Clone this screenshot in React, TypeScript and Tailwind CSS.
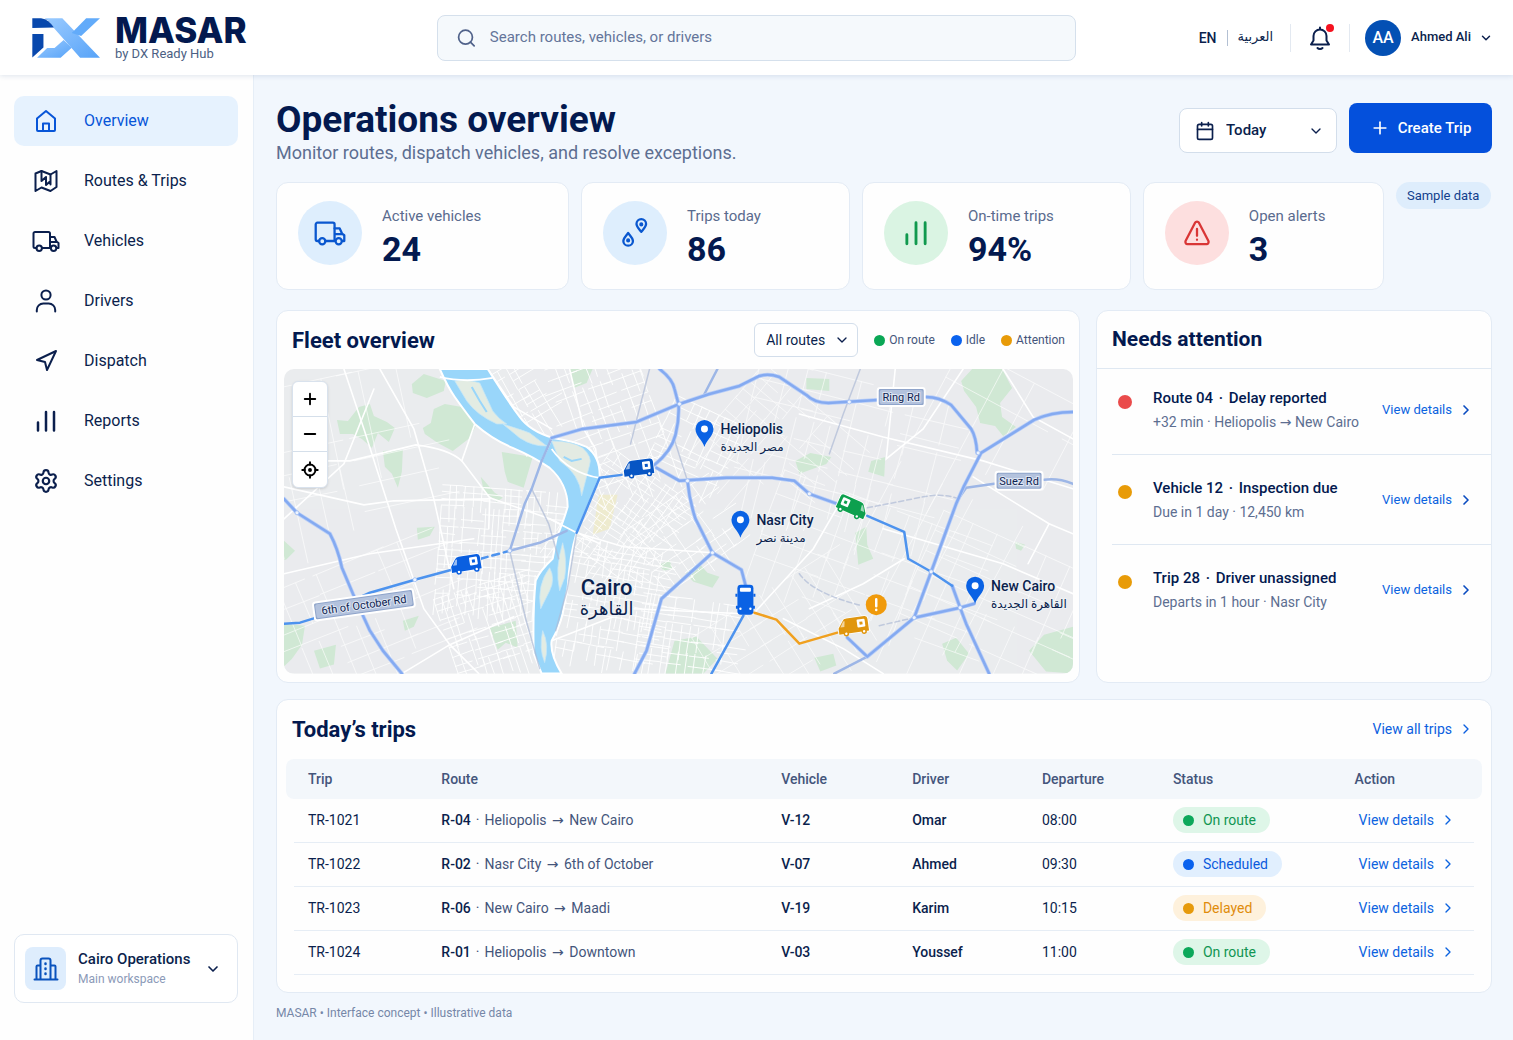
import type { ReactNode } from "react";
import {
  Calendar,
  ChevronDown,
  ChevronRight,
  Minus,
  Navigation,
  Plus,
  Search,
  Settings,
} from "lucide-react";

type Status = "On route" | "Scheduled" | "Delayed";

interface Trip {
  id: string;
  route: string;
  from: string;
  to: string;
  vehicle: string;
  driver: string;
  departure: string;
  status: Status;
}

const trips: Trip[] = [
  { id: "TR-1021", route: "R-04", from: "Heliopolis", to: "New Cairo", vehicle: "V-12", driver: "Omar", departure: "08:00", status: "On route" },
  { id: "TR-1022", route: "R-02", from: "Nasr City", to: "6th of October", vehicle: "V-07", driver: "Ahmed", departure: "09:30", status: "Scheduled" },
  { id: "TR-1023", route: "R-06", from: "New Cairo", to: "Maadi", vehicle: "V-19", driver: "Karim", departure: "10:15", status: "Delayed" },
  { id: "TR-1024", route: "R-01", from: "Heliopolis", to: "Downtown", vehicle: "V-03", driver: "Youssef", departure: "11:00", status: "On route" },
];

const statusStyles: Record<Status, { pill: string; dot: string }> = {
  "On route": { pill: "bg-[#def6e8] text-[#119552]", dot: "bg-[#0ca85a]" },
  Scheduled: { pill: "bg-[#e1effe] text-[#0b5bdd]", dot: "bg-[#0a62ee]" },
  Delayed: { pill: "bg-[#fef1dc] text-[#e08c0b]", dot: "bg-[#e69a0c]" },
};

const alerts = [
  { title: "Route 04", issue: "Delay reported", detail: "+32 min · Heliopolis → New Cairo", dot: "bg-[#ea4b4b]" },
  { title: "Vehicle 12", issue: "Inspection due", detail: "Due in 1 day · 12,450 km", dot: "bg-[#e89b08]" },
  { title: "Trip 28", issue: "Driver unassigned", detail: "Departs in 1 hour · Nasr City", dot: "bg-[#e89b08]" },
];

interface IconProps {
  className?: string;
  children?: ReactNode;
}

function Icon({ className = "size-7", children }: IconProps) {
  return (
    <svg
      viewBox="0 0 28 28"
      fill="none"
      stroke="currentColor"
      strokeWidth="2"
      strokeLinecap="round"
      strokeLinejoin="round"
      aria-hidden="true"
      className={className}
    >
      {children}
    </svg>
  );
}

function HomeIcon() {
  return (
    <Icon>
      <path d="M5 11.5 14 4l9 7.5V23a1 1 0 0 1-1 1H6a1 1 0 0 1-1-1z" />
      <path d="M11 24v-7.5h6V24" />
    </Icon>
  );
}

function RoutesIcon() {
  return (
    <Icon>
      <path d="M3.500 6.500 9.500 4l9 3.500 6-3.500v16l-6 4-9-3.500-6 3.500z" />
      <path d="M9.500 4v10M18.500 7.500v10M9.500 14l4.500-4v8l4.500-4" />
    </Icon>
  );
}

function TruckIcon({ className }: IconProps) {
  return (
    <Icon className={className}>
      <path d="M4.500 21H3a1.500 1.500 0 0 1-1.500-1.500v-13A1.500 1.500 0 0 1 3 5h13.500A1.500 1.500 0 0 1 18 6.500V21H10" />
      <path d="M18 10h4.500l2 4.500 2 1.500v5H25M18.500 15h6" />
      <circle cx="7.200" cy="21.200" r="2.700" />
      <circle cx="21.600" cy="21.200" r="2.700" />
    </Icon>
  );
}

function DriverIcon() {
  return (
    <Icon>
      <circle cx="14" cy="8" r="4.600" />
      <path d="M4.800 24.500V23a6.500 6.500 0 0 1 6.500-6.500h5.400a6.500 6.500 0 0 1 6.500 6.500v1.500" />
    </Icon>
  );
}

function BarsIcon({ className }: IconProps) {
  return (
    <Icon className={className}>
      <path d="M6 15.500v8M14 5v18.500M22 5v18.500" strokeWidth="2.500" />
    </Icon>
  );
}

function PinsIcon() {
  return (
    <Icon className="size-8">
      <path d="M19.500 13c-2.300-3-4.200-4.600-4.200-6.900a4.200 4.200 0 0 1 8.400 0c0 2.300-1.900 3.900-4.200 6.900z" />
      <path d="M8 14c-2.300 3-4.200 4.600-4.200 6.900a4.200 4.200 0 0 0 8.400 0C12.200 18.600 10.300 17 8 14z" />
      <circle cx="19.500" cy="6.500" r="0.800" fill="currentColor" />
      <circle cx="8" cy="20.500" r="0.800" fill="currentColor" />
    </Icon>
  );
}

function AlertIcon() {
  return (
    <Icon className="size-8">
      <path d="M12.300 5 4 21a2 2 0 0 0 1.700 2.800h16.600A2 2 0 0 0 24 21L15.700 5a2 2 0 0 0-3.400 0z" />
      <path d="M14 10.500v6M14 19.800v.2" />
    </Icon>
  );
}

function BellIcon() {
  return (
    <Icon className="size-7">
      <path d="M5 20.500h18l-2.500-4V12a6.500 6.500 0 0 0-13 0v4.500zM14 5V3.500" />
      <path d="M11.500 24c1.200 1.300 3.800 1.300 5 0" />
    </Icon>
  );
}

function BuildingsIcon() {
  return (
    <Icon>
      <path d="M2.500 24.500h23M8.500 24.500V5.500a2 2 0 0 1 2-2h6a2 2 0 0 1 2 2v19M8.500 10.500H5.500a1 1 0 0 0-1 1v13M18.500 10.500h4a1 1 0 0 1 1 1v13" />
      <path d="M13.500 8.500v.5M13.500 13.500v.5M13.500 18.500v.5" strokeWidth="2.500" />
    </Icon>
  );
}

function LocateIcon() {
  return (
    <Icon className="size-[18px]">
      <circle cx="14" cy="14" r="8.500" strokeWidth="3" />
      <circle cx="14" cy="14" r="2" fill="currentColor" />
      <path d="M14 2v4M14 22v4M2 14h4M22 14h4" strokeWidth="3" />
    </Icon>
  );
}

function Logo() {
  return (
    <svg viewBox="97 50 202 118" className="h-10 w-17 shrink-0" aria-hidden="true">
      <defs>
        <linearGradient id="logo-light" x1="0" y1="0" x2="1" y2="1">
          <stop offset="0" stopColor="#9bcbff" />
          <stop offset="1" stopColor="#57a3f8" />
        </linearGradient>
      </defs>
      <path d="M134 50H187L299 168H240L160 77Q150 58 134 50Z" fill="url(#logo-light)" />
      <path d="M258 50H299L243 103L215 94Z" fill="#62abfa" />
      <path d="M112 168L142 139H164L191 115L215 138L182 168Z" fill="url(#logo-light)" />
      <path d="M98 50H124Q148 54 162 78L98 79Z" fill="#0848ad" />
      <path d="M98 97H131V137L98 167Z" fill="#0848ad" />
    </svg>
  );
}

function Header() {
  return (
    <header className="relative z-10 grid h-[75px] shrink-0 grid-cols-[13fr_19fr_13fr] items-center bg-white shadow-[0_1px_5px_rgba(30,70,130,0.14)]">
      <a href="#home" className="flex items-center gap-[15px] pl-8">
        <Logo />
        <span className="flex flex-col">
          <span className="font-[Inter,sans-serif] text-[35px] leading-8 font-extrabold text-[#03194f]">
            MASAR
          </span>
          <span className="text-[13px] leading-4 text-[#4c5f83]">by DX Ready Hub</span>
        </span>
      </a>

      <label className="flex h-[46px] items-center gap-3 rounded-lg border border-[#d5e0ec] bg-[#f5f9fc] pl-[17px]">
        <Search className="size-6 p-px text-[#50628a]" aria-hidden="true" />
        <input
          type="search"
          aria-label="Search"
          placeholder="Search routes, vehicles, or drivers"
          className="w-full bg-transparent text-[15px] outline-none placeholder:text-[#64759a]"
        />
      </label>

      <div className="flex items-center justify-end pr-5 text-sm font-medium">
        <button type="button">EN</button>
        <span className="mx-[10px] h-4 w-px bg-[#b3c0d3]" />
        <button type="button" lang="ar" className="text-[13px]">
          العربية
        </button>
        <span className="ml-[17px] h-7 w-px bg-[#e3e9f1]" />
        <button type="button" aria-label="Notifications" className="relative mx-[15px]">
          <BellIcon />
          <span className="absolute top-0 right-0 size-2 rounded-full bg-[#f5121f]" />
        </button>
        <span className="h-7 w-px bg-[#e3e9f1]" />
        <button type="button" className="ml-[15px] flex items-center">
          <span className="flex size-9 items-center justify-center rounded-full bg-[#0450b4] text-base text-white">
            AA
          </span>
          <span className="mr-2 ml-[10px] text-[13px]">Ahmed Ali</span>
          <ChevronDown className="size-[14px]" strokeWidth={2.5} aria-hidden="true" />
        </button>
      </div>
    </header>
  );
}

const navItems = [
  { label: "Overview", icon: <HomeIcon /> },
  { label: "Routes & Trips", icon: <RoutesIcon /> },
  { label: "Vehicles", icon: <TruckIcon /> },
  { label: "Drivers", icon: <DriverIcon /> },
  { label: "Dispatch", icon: <Navigation className="size-7 p-0.5" aria-hidden="true" /> },
  { label: "Reports", icon: <BarsIcon /> },
  { label: "Settings", icon: <Settings className="size-7 p-px" aria-hidden="true" /> },
];

function Sidebar() {
  return (
    <aside className="flex w-[254px] shrink-0 flex-col justify-between border-r border-[#e6eef7] bg-[#fefefe] pt-[21px] pr-[15px] pb-[37px] pl-[14px]">
      <nav className="flex flex-col gap-[10px]">
        {navItems.map((item, i) => (
          <a
            key={item.label}
            href={`#${item.label}`}
            aria-current={i === 0 ? "page" : undefined}
            className={
              i === 0
                ? "flex h-[50px] items-center gap-6 rounded-[10px] bg-[#e6f2fe] pl-[18px] text-[#0755d8]"
                : "flex h-[50px] items-center gap-6 rounded-[10px] pl-[18px]"
            }
          >
            {item.icon}
            {item.label}
          </a>
        ))}
      </nav>

      <button
        type="button"
        className="flex h-[69px] items-center rounded-[10px] border border-[#e0e8f2] bg-white pr-4 pl-[10px] text-left"
      >
        <span className="flex h-[43px] w-[41px] items-center justify-center rounded-lg bg-[#deedfd] text-[#0a53bd]">
          <BuildingsIcon />
        </span>
        <span className="ml-3 flex flex-1 flex-col">
          <span className="text-[15px] leading-5 font-medium">Cairo Operations</span>
          <span className="text-xs leading-5 text-[#8b9ab8]">Main workspace</span>
        </span>
        <ChevronDown className="size-4" strokeWidth={2.5} aria-hidden="true" />
      </button>
    </aside>
  );
}

interface StatCardProps {
  label: string;
  value: string;
  tone: string;
  icon: ReactNode;
}

function StatCard({ label, value, tone, icon }: StatCardProps) {
  return (
    <div className="flex h-[108px] items-start gap-5 rounded-xl border border-[#e3ebf5] bg-[#fefefe] pt-[18px] pl-[21px]">
      <span className={`flex size-16 shrink-0 items-center justify-center rounded-full ${tone}`}>
        {icon}
      </span>
      <div className="flex flex-col pt-[5px]">
        <span className="text-[15px] leading-5 text-[#5a6b8e]">{label}</span>
        <span className="pt-[3px] text-[34px] leading-10 font-bold text-[#03194f]">{value}</span>
      </div>
    </div>
  );
}

// small seeded generator, so the street pattern stays the same on every render
function seeded(seed: number) {
  let s = seed;
  return () => {
    s = (s * 16807) % 2147483647;
    return s / 2147483647;
  };
}

// path of a slightly irregular street grid, turned by deg round its centre
function streetGrid(cx: number, cy: number, w: number, h: number, step: number, deg: number, seed: number) {
  const rand = seeded(seed);
  const a = (deg * Math.PI) / 180;
  const point = (x: number, y: number) =>
    `${(cx + x * Math.cos(a) - y * Math.sin(a)).toFixed(1)} ${(cy + x * Math.sin(a) + y * Math.cos(a)).toFixed(1)}`;
  let d = "";
  for (let y = -h / 2; y <= h / 2; y += step * (0.7 + rand() * 0.6)) {
    for (let x = -w / 2; x < w / 2; x += step * 3) {
      if (rand() < 0.8) d += `M${point(x, y)}L${point(x + step * (2 + rand() * 2), y + rand() * 2 - 1)}`;
    }
  }
  for (let x = -w / 2; x <= w / 2; x += step * (0.7 + rand() * 0.6)) {
    for (let y = -h / 2; y < h / 2; y += step * 3) {
      if (rand() < 0.8) d += `M${point(x, y)}L${point(x + rand() * 2 - 1, y + step * (2 + rand() * 2))}`;
    }
  }
  return d;
}

const streets = [
  streetGrid(215, 175, 120, 110, 7, 4, 11),
  streetGrid(205, 255, 90, 80, 8, -18, 23),
  streetGrid(335, 150, 90, 110, 7, 35, 37),
  streetGrid(325, 235, 90, 120, 7, 10, 41),
  streetGrid(330, 45, 130, 80, 10, 70, 53),
  streetGrid(415, 75, 80, 70, 9, 25, 67),
  streetGrid(400, 170, 90, 80, 9, -35, 71),
  streetGrid(400, 265, 90, 70, 9, 8, 83),
  streetGrid(235, 25, 50, 60, 9, -30, 89),
];

const outerStreets = [
  streetGrid(70, 90, 180, 170, 30, -12, 97),
  streetGrid(70, 250, 170, 110, 21, -22, 101),
  streetGrid(560, 75, 200, 130, 17, 14, 103),
  streetGrid(570, 190, 190, 120, 20, 20, 107),
  streetGrid(500, 265, 160, 90, 18, -32, 109),
  streetGrid(715, 80, 160, 150, 44, 28, 113),
  streetGrid(710, 240, 170, 140, 26, 24, 127),
  streetGrid(480, 65, 90, 110, 14, 40, 131),
];

const parks = [
  "M128 15 140 5 162 12 160 22 143 29 129 24Z",
  "M139 59 147 54 150 40 161 35 184 39 192 57 186 69 169 82 154 74 141 65Z",
  "M53 51 64 52 75 38 86 35 90 47 103 53 111 59 105 73 94 64 88 79 78 70 69 65 56 65Z",
  "M99 82 119 81 118 103 114 119 108 105 101 98Z",
  "M218 83 249 88 240 119 224 113 221 103Z",
  "M197 108 211 124 219 129 213 133 200 122Z",
  "M0 255 21 257 18 276 8 290 0 298Z",
  "M30 282 52 276 50 296 36 300Z",
  "M206 259 218 256 232 252 234 279 222 274 214 281Z",
  "M133 159 151 158 146 167 134 171Z",
  "M119 252 135 247 130 258 121 262Z",
  "M0 172 11 182 2 191 0 191Z",
  "M286 0 309 0 303 14 290 19Z",
  "M391 272 413 268 434 290 420 305 382 305Z",
  "M402 205 415 194 424 204 436 208 429 219 410 213Z",
  "M512 92 527 84 548 88 543 95 516 105Z",
  "M678 12 689 0 719 0 729 19 717 34 719 48 733 58 720 67 712 57 697 54 693 38 681 22Z",
  "M523 9 546 10 546 22 523 20Z",
  "M588 92 602 88 601 108 585 103Z",
  "M746 282 761 266 790 258 790 305 763 303Z",
  "M659 275 673 269 686 285 674 302 664 292Z",
  "M531 289 550 285 553 297 537 303Z",
  "M572 164 583 158 584 176 590 190 575 196Z",
  "M732 173 742 176 738 182 733 180Z",
  "M376 196 386 191 389 200 380 202Z",
];

const highways = [
  "M0 130 13 144 46 165Q54 180 58 199L69 225 86 262 99 282 118 305",
  "M268 69 299 60 353 53 396 35 426 25 456 17 476 7Q485 4 496 8L523 26Q531 34 545 34L594 31",
  "M643 28Q656 28 668 36L688 60Q693 68 694 84",
  "M376 0Q389 10 391 20L395 35Q396 50 392 66T371 96",
  "M373 99 396 112 443 109 489 109 511 112 526 125 554 135",
  "M404 112Q406 132 412 150L429 184 458 201 462 216",
  "M429 184 378 230 363 282 351 305",
  "M790 43Q768 43 751 51L698 84 681 117 673 135 648 203 631 249",
  "M631 249 677 239 691 235",
  "M631 249 584 288 564 269",
  "M669 217 677 239 683 255 706 305",
];

const secondaryHighways = [
  "M226 182 241 135 248 120 258 92 268 69",
  "M434 0 421 25",
  "M676 129 683 119 711 115",
  "M761 111Q775 109 790 115",
  "M584 288 551 305",
  "M226 182 256 174 283 162",
];

const faintRoads = [
  "M226 182 242 250 256 300",
  "M248 120 265 155 275 190",
  "M366 0 347 75",
  "M390 68 404 112",
  "M293 164 284 219 272 262",
  "M577 0 560 45 546 85",
];

const activeRoutes = [
  "M0 255 16 254 29 250 86 224 131 211 168 201",
  "M316 109 338 106M316 109 293 164",
  "M584 147 621 163 625 190 648 203 669 217",
  "M460 247 428 305",
];

const junctions = [
  [226, 182], [131, 211], [13, 144], [396, 35], [404, 112], [429, 184],
  [648, 203], [677, 239], [631, 249], [695, 84], [566, 33], [526, 125],
];

const places = [
  { name: "Heliopolis", arabic: "مصر الجديدة", x: 421, y: 78 },
  { name: "Nasr City", arabic: "مدينة نصر", x: 457, y: 169 },
  { name: "New Cairo", arabic: "القاهرة الجديدة", x: 692, y: 235 },
];

interface RoadSignProps {
  x: number;
  y: number;
  width: number;
  name: string;
  tilt?: number;
}

function RoadSign({ x, y, width, name, tilt = 0 }: RoadSignProps) {
  return (
    <g transform={`translate(${x} ${y}) rotate(${tilt})`}>
      <rect x={-width / 2} y="-9" width={width} height="18" rx="2.500" fill="#8fa4ca" stroke="#fff" strokeWidth="2" />
      <rect x={-width / 2 + 2} y="-7" width={width - 4} height="14" rx="2" fill="#b3c2dd" />
      <text y="4" textAnchor="middle" fontSize="11" fill="#0e2350" stroke="#dfe7f4" strokeWidth="2" paintOrder="stroke">
        {name}
      </text>
    </g>
  );
}

interface VanProps {
  x: number;
  y: number;
  color: string;
  tilt: number;
  flip?: boolean;
}

function Van({ x, y, color, tilt, flip = false }: VanProps) {
  return (
    <g transform={`translate(${x} ${y}) rotate(${tilt}) scale(${flip ? -1 : 1} 1)`}>
      <path
        d="M-15 7V1L-10-6Q-9-8-6-8H12Q15-8 15-5V7Z"
        fill={color}
        stroke="#fff"
        strokeWidth="1.500"
        paintOrder="stroke"
      />
      <path d="M-13 0-9.500-5.500H-8L-9 0Z" fill="#fff" fillOpacity="0.6" />
      <rect x="4" y="-5.500" width="8" height="8" rx="1" fill="#fff" />
      <rect x="6.500" y="-3" width="3" height="3" fill={color} />
      <circle cx="-8" cy="7" r="2" fill="#fff" stroke={color} strokeWidth="1.500" />
      <circle cx="10" cy="7" r="2" fill="#fff" stroke={color} strokeWidth="1.500" />
    </g>
  );
}

function FleetMap() {
  return (
    <svg
      viewBox="0 0 790 305"
      role="img"
      aria-label="Map of Cairo with the live position of the fleet"
      className="block h-auto w-full rounded-[10px]"
    >
      <rect width="790" height="305" fill="#eaecee" />
      <g fill="#d0e8d4">
        {parks.map((d) => (
          <path key={d} d={d} />
        ))}
      </g>
      <path d="M315 126 334 126 326 160 309 166Z" fill="#eeebcf" />

      <g fill="none" stroke="#fff" strokeLinecap="round">
        <g strokeWidth="0.900">
          {streets.map((d) => (
            <path key={d} d={d} />
          ))}
        </g>
        <g strokeWidth="0.900" opacity="0.700">
          {outerStreets.map((d) => (
            <path key={d} d={d} />
          ))}
        </g>
        <g strokeWidth="1.600">
          <path d="M44 92 66 92 132 76Q165 80 178 92L206 129 266 150 316 175" />
          <path d="M0 118 80 136 110 132 206 130" />
          <path d="M60 0 80 60 112 160 140 240 166 276 195 305" />
          <path d="M96 0 130 60 150 130 170 220" />
          <path d="M118 305 166 276 230 248" />
          <path d="M0 205 86 185 190 170" />
          <path d="M0 150 60 95 90 20" />
          <path d="M191 55 178 92M206 129 205 160" />
          <path d="M204 0 230 38 268 60" />
          <path d="M286 0 300 60 312 80 316 109" />
          <path d="M293 164 340 178 430 184M268 272 350 240 460 245" />
          <path d="M516 45 600 68 700 92 790 120" />
          <path d="M720 0 750 48 790 70M690 108 766 155 790 165" />
          <path d="M526 240 580 215 621 190M600 160 720 195 790 225" />
          <path d="M612 0 603 90 640 60 680 0M766 155 745 195" />
          <path d="M500 250 560 280 600 305M470 245 530 180 556 135" />
        </g>
      </g>

      <path
        d="M156 0Q164 18 171 28T191 55Q208 70 229 79T266 99Q284 115 284 138Q280 152 273 169L269 190Q256 202 252 212Q249 240 250 285L258 305H278Q266 285 268 272Q276 258 279 245L284 219Q286 186 293 164L316 109Q317 88 303 78Q290 72 269 69Q246 62 236 48Q224 32 204 0Z"
        fill="#99d6fa"
        stroke="#fff"
        strokeWidth="2"
      />
      <g fill="#e3ece3" stroke="#c4e6f8" strokeWidth="0.800">
        <path d="M171 12Q185 10 196 14L209 42Q215 50 223 55L213 55Q193 46 183 32Z" />
        <path d="M219 55Q235 60 246 64L263 77Q250 78 236 69Z" />
        <path d="M268 72Q288 72 299 79Q309 88 306 96L298 127Q296 105 276 92Z" />
        <path d="M279 174Q284 192 281 209L276 222Q271 200 279 174Z" />
        <path d="M266 199Q272 210 266 222L257 240Q253 216 266 199Z" />
        <path d="M259 262Q266 276 261 294Q255 280 259 262Z" />
      </g>
      <path d="M188 18 196 32 203 43M280 88 288 92 298 90" fill="none" stroke="#99d6fa" strokeWidth="2" />
      <g fill="none" stroke="#fff" strokeWidth="1.800">
        <path d="M156 8Q180 14 209 9M266 150 293 164M258 92 270 66M268 80Q285 104 316 109" />
      </g>

      <g fill="none" strokeLinejoin="round" strokeLinecap="round">
        <g stroke="#aebbd6" strokeWidth="1.500" opacity="0.700">
          {faintRoads.map((d) => (
            <path key={d} d={d} />
          ))}
          <path d="M584 139Q620 132 640 128T676 130M516 205Q530 225 579 237M596 257 631 249" strokeDasharray="5 3" />
        </g>
        <g stroke="#9db6e6" strokeWidth="2.500">
          {secondaryHighways.map((d) => (
            <path key={d} d={d} />
          ))}
        </g>
        <g stroke="#b9cef7" strokeWidth="4">
          {highways.map((d) => (
            <path key={d} d={d} />
          ))}
        </g>
        <g stroke="#84aaf1" strokeWidth="2.500">
          {highways.map((d) => (
            <path key={d} d={d} />
          ))}
        </g>
        <g stroke="#4d93ee" strokeWidth="2.500">
          {activeRoutes.map((d) => (
            <path key={d} d={d} />
          ))}
          <path d="M197 190 226 182" strokeDasharray="7 5" />
        </g>
        <path d="M471 244 493 251 516 275 554 264" stroke="#f0a01f" strokeWidth="2.500" />
      </g>

      <g fill="#eef4ff" stroke="#9dbcf2" strokeWidth="0.800">
        {junctions.map(([x, y]) => (
          <circle key={`${x}-${y}`} cx={x} cy={y} r="2" />
        ))}
      </g>

      <RoadSign x={618} y={28} width={47} name="Ring Rd" />
      <RoadSign x={736} y={112} width={47} name="Suez Rd" />
      <RoadSign x={80} y={236} width={101} name="6th of October Rd" tilt={-8} />

      <Van x={355} y={99} color="#0755c4" tilt={-7} />
      <Van x={182} y={195} color="#0a5fe0" tilt={-9} />
      <Van x={569} y={138} color="#0da04e" tilt={24} flip />
      <Van x={570} y={257} color="#e0960e" tilt={-8} />
      <g transform="translate(462 231)">
        <path d="M-9-6V-3M9-6V-3M-8.500 6V9M8.500 6V9" stroke="#0a62e4" strokeWidth="2" />
        <rect x="-8" y="-15" width="16" height="30" rx="3.500" fill="#0a62e4" />
        <rect x="-5.500" y="-12" width="11" height="4" rx="1" fill="#fff" />
        <circle cx="-5" cy="9" r="1.200" fill="#fff" />
        <circle cx="5" cy="9" r="1.200" fill="#fff" />
      </g>
      <g transform="translate(593 236)">
        <circle r="10.500" fill="#f09a0b" />
        <path d="M0-5.500V1.500M0 5V5.200" stroke="#fff" strokeWidth="2.500" strokeLinecap="round" />
      </g>

      {places.map((place) => (
        <g key={place.name} transform={`translate(${place.x} ${place.y})`}>
          <path d="M0 0C-2-7-9-11-9-18A9 9 0 0 1 9-18C9-11 2-7 0 0Z" fill="#0a62e4" />
          <circle cy="-18" r="3.500" fill="#fff" />
          <g fill="#0b1f4d" stroke="#eef1f4" strokeWidth="2.500" strokeLinejoin="round" paintOrder="stroke">
            <text x="16" y="-13" fontSize="14" fontWeight="500">
              {place.name}
            </text>
            <text x="16" y="4" fontSize="12">
              {place.arabic}
            </text>
          </g>
        </g>
      ))}
      <g fill="#0b1f4d" stroke="#eef1f4" strokeWidth="3" strokeLinejoin="round" paintOrder="stroke" textAnchor="middle">
        <text x="323" y="226" fontSize="22" fontWeight="500">
          Cairo
        </text>
        <text x="323" y="246" fontSize="18">
          القاهرة
        </text>
      </g>
    </svg>
  );
}

const legend = [
  { label: "On route", dot: "bg-[#0aa755]" },
  { label: "Idle", dot: "bg-[#0a62ee]" },
  { label: "Attention", dot: "bg-[#e89b08]" },
];

function FleetOverview() {
  return (
    <section className="rounded-xl border border-[#e3ebf5] bg-[#fefefe] pr-[6px] pb-2 pl-[7px]">
      <div className="flex h-[58px] items-center pr-2 pl-2">
        <h2 className="flex-1 text-[22px] font-bold text-[#03194f]">Fleet overview</h2>
        <label className="relative flex items-center">
          <select
            aria-label="Routes shown"
            className="h-[34px] w-[104px] appearance-none rounded-md border border-[#d3deeb] bg-white pl-[11px] text-sm"
          >
            <option>All routes</option>
          </select>
          <ChevronDown className="pointer-events-none absolute right-2 size-4" aria-hidden="true" />
        </label>
        <ul className="ml-4 flex gap-4 text-xs text-[#44557b]">
          {legend.map((item) => (
            <li key={item.label} className="flex items-center gap-1">
              <span className={`size-[11px] rounded-full ${item.dot}`} />
              {item.label}
            </li>
          ))}
        </ul>
      </div>
      <div className="relative">
        <FleetMap />
        <div className="absolute top-3 left-2 flex w-9 flex-col divide-y divide-[#d5dfea] rounded-md border border-[#d9e2ed] bg-white text-black shadow-sm">
          <button type="button" aria-label="Zoom in" className="flex h-[35px] items-center justify-center">
            <Plus className="size-[18px]" strokeWidth={2.5} />
          </button>
          <button type="button" aria-label="Zoom out" className="flex h-[35px] items-center justify-center">
            <Minus className="size-[18px]" strokeWidth={2.5} />
          </button>
          <button type="button" aria-label="Centre map" className="flex h-[35px] items-center justify-center">
            <LocateIcon />
          </button>
        </div>
      </div>
    </section>
  );
}

function NeedsAttention() {
  return (
    <section className="rounded-xl border border-[#e3ebf5] bg-[#fefefe]">
      <h2 className="flex h-[58px] items-center border-b border-[#dfe8f2] pl-[15px] text-[21px] font-bold text-[#03194f]">
        Needs attention
      </h2>
      <ul className="ml-[15px] divide-y divide-[#dfe8f2]">
        {alerts.map((alert) => (
          <li
            key={alert.title}
            className="flex h-[90px] items-center pr-[17px] pl-[6px] first:h-[86px] first:pb-1"
          >
            <span className={`mr-[21px] mb-4 size-[14px] shrink-0 rounded-full ${alert.dot}`} />
            <div className="flex-1">
              <p className="text-[15px] leading-6 font-medium text-[#03194f]">
                {alert.title} <span className="mx-0.5">·</span> {alert.issue}
              </p>
              <p className="text-sm leading-6 text-[#5d6e91]">{alert.detail}</p>
            </div>
            <a href="#details" className="flex items-center gap-1.5 text-[13px] text-[#0b63e0]">
              View details
              <ChevronRight className="size-4 text-[#0a4cc0]" strokeWidth={2.5} aria-hidden="true" />
            </a>
          </li>
        ))}
      </ul>
    </section>
  );
}

function TripsTable() {
  return (
    <section className="mt-4 rounded-xl border border-[#e3ebf5] bg-[#fefefe] pr-[17px] pb-[17px] pl-[17px]">
      <div className="-ml-0.5 flex h-[59px] items-center justify-between">
        <h2 className="text-[22px] font-bold text-[#03194f]">Today’s trips</h2>
        <a href="#trips" className="flex items-center gap-1.5 text-sm text-[#0b5fe0]">
          View all trips
          <ChevronRight className="size-4" aria-hidden="true" />
        </a>
      </div>
      <table className="w-full table-fixed border-separate border-spacing-0 text-left text-sm">
        <colgroup>
          <col className="w-[11.3%]" />
          <col className="w-[28.8%]" />
          <col className="w-[11.1%]" />
          <col className="w-[11%]" />
          <col className="w-[11.1%]" />
          <col className="w-[15.4%]" />
          <col />
        </colgroup>
        <thead>
          <tr className="h-10 text-[#44557b] *:relative *:bg-[#f3f7fb] *:pl-[14px] *:font-medium">
            <th className="before:absolute before:inset-y-0 before:-left-2 before:w-2 before:rounded-l-lg before:bg-[#f3f7fb]">
              Trip
            </th>
            <th>Route</th>
            <th>Vehicle</th>
            <th>Driver</th>
            <th>Departure</th>
            <th>Status</th>
            <th className="before:absolute before:inset-y-0 before:-right-2 before:w-2 before:rounded-r-lg before:bg-[#f3f7fb]">
              Action
            </th>
          </tr>
        </thead>
        <tbody>
          {trips.map((trip) => (
            <tr key={trip.id} className="h-11 *:border-b *:border-[#e6edf5] *:pl-[14px]">
              <td>{trip.id}</td>
              <td className="text-[#44557b]">
                <span className="font-medium text-[#0b1f4d]">{trip.route}</span>
                <span className="mx-[5px]">·</span>
                {trip.from} <span className="mx-0.5">→</span> {trip.to}
              </td>
              <td className="font-medium">{trip.vehicle}</td>
              <td className="font-medium">{trip.driver}</td>
              <td>{trip.departure}</td>
              <td>
                <span
                  className={`inline-flex h-[26px] items-center gap-[9px] rounded-full pr-[14px] pl-[10px] ${statusStyles[trip.status].pill}`}
                >
                  <span className={`size-[11px] rounded-full ${statusStyles[trip.status].dot}`} />
                  {trip.status}
                </span>
              </td>
              <td>
                <a href={`#${trip.id}`} className="flex items-center gap-1.5 pl-1 text-[#0b63e0]">
                  View details
                  <ChevronRight className="size-4" aria-hidden="true" />
                </a>
              </td>
            </tr>
          ))}
        </tbody>
      </table>
    </section>
  );
}

export default function App() {
  return (
    <div className="flex min-h-screen flex-col bg-[#f2f7fd] font-[Roboto,'DejaVu_Sans',sans-serif] text-base text-[#0b1f4d]">
      <Header />
      <div className="flex flex-1">
        <Sidebar />
        <main className="min-w-0 flex-1 pt-[25px] pr-[21px] pl-[22px]">
          <div className="flex items-start justify-between">
            <div>
              <h1 className="text-[37px] leading-10 font-bold text-[#03194f]">Operations overview</h1>
              <p className="text-lg leading-[26px] text-[#5d6e91]">
                Monitor routes, dispatch vehicles, and resolve exceptions.
              </p>
            </div>
            <div className="flex items-end gap-3 pt-[3px]">
              <label className="relative flex items-center">
                <Calendar className="pointer-events-none absolute left-4 size-5" aria-hidden="true" />
                <select
                  aria-label="Period"
                  className="h-[45px] w-[158px] appearance-none rounded-lg border border-[#d3deeb] bg-white pl-[46px] text-[15px] font-medium"
                >
                  <option>Today</option>
                </select>
                <ChevronDown className="pointer-events-none absolute right-[13px] size-4" aria-hidden="true" />
              </label>
              <button
                type="button"
                className="flex h-[50px] w-[143px] items-center justify-center gap-2 rounded-lg bg-[#0450dc] text-[15px] font-medium text-white"
              >
                <Plus className="size-5" aria-hidden="true" />
                Create Trip
              </button>
            </div>
          </div>

          <div className="mt-4 grid grid-cols-[73fr_67fr_67fr_60fr_24fr] gap-3">
            <StatCard label="Active vehicles" value="24" tone="bg-[#deeefd] text-[#0a57cf]" icon={<TruckIcon className="size-8" />} />
            <StatCard label="Trips today" value="86" tone="bg-[#deeefd] text-[#0a57cf]" icon={<PinsIcon />} />
            <StatCard label="On-time trips" value="94%" tone="bg-[#daf4e3] text-[#10994e]" icon={<BarsIcon className="size-8" />} />
            <StatCard label="Open alerts" value="3" tone="bg-[#fddfdf] text-[#d93636]" icon={<AlertIcon />} />
            <span className="flex h-[27px] w-[95px] items-center justify-center rounded-full bg-[#deedfc] text-[13px] whitespace-nowrap text-[#123f8c]">
              Sample data
            </span>
          </div>

          <div className="mt-5 grid grid-cols-[67fr_33fr] gap-4">
            <FleetOverview />
            <NeedsAttention />
          </div>

          <TripsTable />

          <footer className="py-[10px] text-xs leading-5 text-[#7687a8]">
            MASAR • Interface concept • Illustrative data
          </footer>
        </main>
      </div>
    </div>
  );
}
